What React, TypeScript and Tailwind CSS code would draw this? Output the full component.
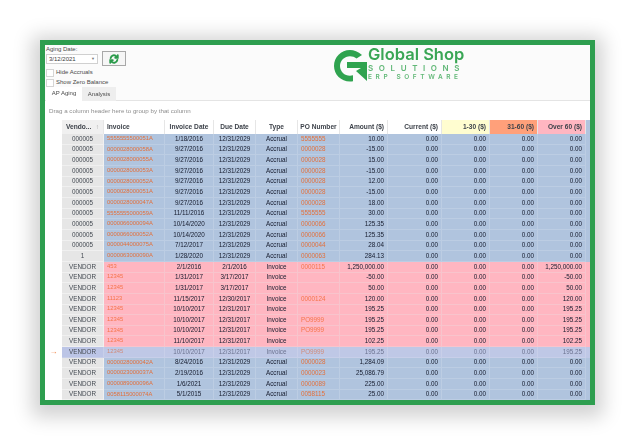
const sans = "font-['Liberation_Sans',Arial,sans-serif]";
const grid = "grid grid-cols-[17px_42px_61px_49px_42px_42px_42px_48px_54px_48px_48px_48px_4px]";

type R = [string, string, string, string, string, string, string, string?, string?];
const blue = (v: string, inv: string, d: string, po: string, amt: string): R => [v, inv, d, "12/31/2029", "Accrual", po, amt];
const pink = (inv: string, d: string, due: string, po: string, amt: string): R => ["VENDOR", inv, d, due, "Invoice", po, amt, amt];

const rowsA: R[] = [
  blue("000005", "5555555500051A", "1/18/2016", "5555555", "10.00"),
  blue("000005", "0000028000058A", "9/27/2016", "0000028", "-15.00"),
  blue("000005", "0000028000055A", "9/27/2016", "0000028", "15.00"),
  blue("000005", "0000028000053A", "9/27/2016", "0000028", "-15.00"),
  blue("000005", "0000028000052A", "9/27/2016", "0000028", "12.00"),
  blue("000005", "0000028000051A", "9/27/2016", "0000028", "-15.00"),
  blue("000005", "0000028000047A", "9/27/2016", "0000028", "18.00"),
  blue("000005", "5555555000059A", "11/11/2016", "5555555", "30.00"),
  blue("000005", "0000066000094A", "10/14/2020", "0000066", "125.35"),
  blue("000005", "0000066000052A", "10/14/2020", "0000066", "125.35"),
  blue("000005", "0000044000075A", "7/12/2017", "0000044", "28.04"),
  blue("1", "0000063000090A", "1/28/2020", "0000063", "284.13"),
];
const rowsB: R[] = [
  pink("453", "2/1/2016", "2/1/2016", "0000115", "1,250,000.00"),
  pink("12345", "1/31/2017", "3/17/2017", "", "-50.00"),
  pink("12345", "1/31/2017", "3/17/2017", "", "50.00"),
  pink("11123", "11/15/2017", "12/30/2017", "0000124", "120.00"),
  pink("12345", "10/10/2017", "12/31/2017", "", "195.25"),
  pink("12345", "10/10/2017", "12/31/2017", "PO9999", "195.25"),
  pink("12345", "10/10/2017", "12/31/2017", "PO9999", "195.25"),
  pink("12345", "11/10/2017", "12/31/2017", "", "102.25"),
];
const selected: R = pink("12345", "10/10/2017", "12/31/2017", "PO9999", "195.25");
const rowsC: R[] = [
  blue("VENDOR", "0000028000042A", "8/24/2016", "0000028", "1,284.09"),
  blue("VENDOR", "0000023000037A", "2/19/2016", "0000023", "25,086.79"),
  blue("VENDOR", "0000089000096A", "1/6/2021", "0000089", "225.00"),
  blue("VENDOR", "0058115000074A", "5/1/2015", "0058115", "25.00"),
];

function Row({ r, tone }: { r: R; tone: "blue" | "pink" | "sel" }) {
  const bg = tone === "blue" ? "bg-[#b0c4de]" : tone === "pink" ? "bg-[#ffb6c1]" : "bg-[#bfc8e6]";
  const line = tone === "blue" ? "border-[#bccde3]" : tone === "pink" ? "border-[#f8c4cc]" : "border-[#c8cfe9]";
  const text = tone === "sel" ? "text-[#6c7390]" : "text-[#141a2c]";
  const link = tone === "sel" ? "text-[#d08a78]" : tone === "pink" ? "text-[#f5754a]" : "text-[#e2703c]";
  const cell = `h-full flex items-center border-r border-b ${line} ${bg}`;
  return (
    <div className={`${grid} h-[10.67px] text-[6.3px] leading-none`}>
      <div className="flex h-full items-center justify-center bg-white text-[8px] font-bold text-[#f08a50]">{tone === "sel" ? "→" : ""}</div>
      <div className={`flex h-full items-center justify-center border-r border-b ${tone === "sel" ? "border-[#c8cfe9] bg-[#bcc5e6]" : "border-[#f0f0f0] bg-[#e6e6e6]"} text-[#444a52]`}>{r[0]}</div>
      <div className={`${cell} pl-[3px] text-[5.8px] ${link}`}>{r[1]}</div>
      <div className={`${cell} justify-center ${text}`}>{r[2]}</div>
      <div className={`${cell} justify-center ${text}`}>{r[3]}</div>
      <div className={`${cell} justify-center ${text}`}>{r[4]}</div>
      <div className={`${cell} pl-[3px] ${link}`}>{r[5]}</div>
      <div className={`${cell} justify-end pr-[3px] ${text}`}>{r[6]}</div>
      <div className={`${cell} justify-end pr-[3px] ${text}`}>0.00</div>
      <div className={`${cell} justify-end pr-[3px] ${text}`}>0.00</div>
      <div className={`${cell} justify-end pr-[3px] ${text}`}>0.00</div>
      <div className={`${cell} justify-end pr-[3px] ${text}`}>{r[7] ?? "0.00"}</div>
      <div className={`h-full ${bg}`} />
    </div>
  );
}

function Head({ children, cls = "" }: { children?: React.ReactNode; cls?: string }) {
  return <div className={`flex h-full items-center whitespace-nowrap border-r border-[#e6e6e6] text-[6.6px] font-bold text-[#3e434b] ${cls}`}>{children}</div>;
}

function Logo() {
  return (
    <div className="flex items-start gap-[1px]">
      <svg width="34" height="34" viewBox="0 0 34 34" className="mt-[3px] shrink-0">
        <path d="M29 6 C25 2.5 21 1 17 1 C8 1 1 8 1 17 C1 25.5 8 32.5 17 32.5 C18 32.5 19 32.4 20 32.2 L20 26.3 C19 26.6 18 26.8 17 26.8 C11.5 26.8 7 22.5 7 17 C7 11.5 11.5 7.2 17 7.2 C19.5 7.2 21.5 8 23.5 9.6 Z" fill="#2fa34f" />
        <path d="M14 13 L34 13 L34 32 L23 22 L28 19 L14 19 Z" fill="#2fa34f" />
      </svg>
      <div className="flex flex-col font-['Inter',Arial,sans-serif]">
        <div className="text-[16.5px] leading-[17px] font-semibold whitespace-nowrap text-[#3aa655]">Global Shop</div>
        <div className="text-[8px] leading-[10px] font-semibold tracking-[5.6px] whitespace-nowrap text-[#62b878]">SOLUTIONS</div>
        <div className="text-[6.5px] leading-[8px] font-semibold tracking-[3.6px] whitespace-nowrap text-[#62b878]">ERP SOFTWARE</div>
      </div>
    </div>
  );
}

export default function App() {
  return (
    <div className={`h-[445px] w-[635px] overflow-hidden bg-white pt-[40px] pl-[40px] ${sans}`}>
      <div className="h-[365px] w-[555px] overflow-hidden border-[5px] border-[#2e9e4f] bg-white shadow-[0_4px_18px_8px_rgba(0,0,0,0.18)]">
        <div className="flex h-full flex-col text-[6px] blur-[0.6px]">
          <div className="flex h-[56px] shrink-0 justify-between border-b border-[#e4e4e4] bg-[#fbfbfb] pt-[1px] pl-[1px]">
            <div className="flex flex-col text-[#4a4a4a]">
              <div className="h-[8px] leading-[7px]">Aging Date:</div>
              <div className="flex items-start gap-[4px]">
                <div className="flex h-[10px] w-[52px] items-center justify-between border border-[#d0d0d0] bg-white px-[2px] text-[#3c3c3c]">
                  <span>3/12/2021</span>
                  <span className="text-[4px] text-[#777]">▼</span>
                </div>
                <div className="-mt-[3px] flex h-[15px] w-[24px] items-center justify-center border border-[#a8a8a8] bg-[#f6f6f6]">
                  <svg width="10" height="10" viewBox="0 0 24 24" fill="none" stroke="#2a9a4a" strokeWidth="4.5" strokeLinecap="round">
                    <path d="M4 10a8 8 0 0 1 14-4l3 3M21 3v6h-6" />
                    <path d="M20 14a8 8 0 0 1-14 4l-3-3M3 21v-6h6" />
                  </svg>
                </div>
              </div>
              <div className="mt-[2px] flex h-[9px] items-center gap-[2px]">
                <div className="h-[8px] w-[8px] border border-[#d5d5d5] bg-white" />
                <span>Hide Accruals</span>
              </div>
              <div className="mt-[1px] flex h-[9px] items-center gap-[2px]">
                <div className="h-[8px] w-[8px] border border-[#d5d5d5] bg-white" />
                <span>Show Zero Balance</span>
              </div>
            </div>
            <div className="mr-[127px] w-[130px]">
              <Logo />
            </div>
          </div>
          <div className="-mt-[14px] flex h-[14px] shrink-0 pl-[1px] text-[#4a4a4a]">
            <div className="flex w-[36px] items-center justify-center border-b border-white bg-white">AP Aging</div>
            <div className="flex w-[34px] items-center justify-center bg-[#eeeeee]">Analysis</div>
          </div>
          <div className="flex h-[19px] shrink-0 items-center bg-white pl-[4px] text-[6.2px] text-[#8e8e8e]">
            Drag a column header here to group by that column
          </div>
          <div className={`${grid} h-[14px] shrink-0 bg-white`}>
            <div className="bg-white" />
            <Head cls="justify-between bg-[#f0f0f0] px-[4px]"><span>Vendo...</span><span className="font-normal text-[#999]">↑</span></Head>
            <Head cls="pl-[3px]">Invoice</Head>
            <Head cls="justify-center">Invoice Date</Head>
            <Head cls="justify-center">Due Date</Head>
            <Head cls="justify-center">Type</Head>
            <Head cls="justify-center">PO Number</Head>
            <Head cls="justify-end pr-[3px]">Amount ($)</Head>
            <Head cls="justify-end pr-[3px]">Current ($)</Head>
            <Head cls="justify-end bg-[#fffdd0] pr-[3px]">1-30 ($)</Head>
            <Head cls="justify-end bg-[#ffa07a] pr-[3px]">31-60 ($)</Head>
            <Head cls="justify-end bg-[#ffb6c1] pr-[3px]">Over 60 ($)</Head>
            <div className="h-full bg-[#b0c4de]" />
          </div>
          <div className="flex flex-col">
            {rowsA.map((r, i) => <Row key={"a" + i} r={r} tone="blue" />)}
            {rowsB.map((r, i) => <Row key={"b" + i} r={r} tone="pink" />)}
            <Row r={selected} tone="sel" />
            {rowsC.map((r, i) => <Row key={"c" + i} r={r} tone="blue" />)}
          </div>
        </div>
      </div>
    </div>
  );
}
